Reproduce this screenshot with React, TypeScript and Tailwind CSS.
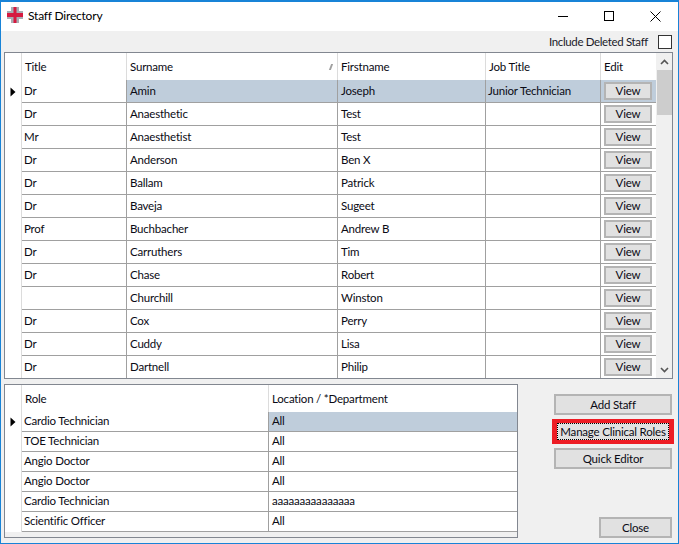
const staff = [
  ["Dr", "Amin", "Joseph", "Junior Technician"],
  ["Dr", "Anaesthetic", "Test", ""],
  ["Mr", "Anaesthetist", "Test", ""],
  ["Dr", "Anderson", "Ben X", ""],
  ["Dr", "Ballam", "Patrick", ""],
  ["Dr", "Baveja", "Sugeet", ""],
  ["Prof", "Buchbacher", "Andrew B", ""],
  ["Dr", "Carruthers", "Tim", ""],
  ["Dr", "Chase", "Robert", ""],
  ["", "Churchill", "Winston", ""],
  ["Dr", "Cox", "Perry", ""],
  ["Dr", "Cuddy", "Lisa", ""],
  ["Dr", "Dartnell", "Philip", ""],
];

const roles = [
  ["Cardio Technician", "All"],
  ["TOE Technician", "All"],
  ["Angio Doctor", "All"],
  ["Angio Doctor", "All"],
  ["Cardio Technician", "aaaaaaaaaaaaaaa"],
  ["Scientific Officer", "All"],
];

function Arrow() {
  return (
    <svg width="6" height="10" viewBox="0 0 6 10" className="block">
      <path d="M0.5 0.5 L5.5 5 L0.5 9.5 Z" fill="#000" />
    </svg>
  );
}

function Btn({ label, className }: { label: string; className: string }) {
  return (
    <div className={"flex items-center justify-center border-2 border-[#b4b4b4] bg-[#e1e1e1] " + className}>
      {label}
    </div>
  );
}

export default function App() {
  return (
    <div className="w-[679px] h-[544px] overflow-hidden flex flex-col bg-[#f0f0f0] border border-[#1883d7] border-t-2 text-[11.5px] tracking-[-0.2px] text-[#0a0a14] font-['Lato','Roboto',sans-serif]">
      <div className="h-[29px] shrink-0 bg-white flex items-center pb-[1px]">
        <svg width="16" height="16" viewBox="0 0 16 16" className="ml-[6px] mr-[5px] mb-[2px] shrink-0">
          <rect x="4" y="0" width="8" height="16" fill="#a9adb4" />
          <rect x="0" y="4" width="16" height="8" fill="#a9adb4" />
          <rect x="0" y="6" width="16" height="4" fill="#d6193f" />
          <rect x="6.5" y="0" width="3" height="16" fill="#d6193f" />
        </svg>
        <span className="text-[12px] text-black">Staff Directory</span>
        <div className="ml-auto flex items-center">
          <div className="w-[46px] flex justify-center">
            <div className="w-[10px] h-px bg-black" />
          </div>
          <div className="w-[46px] flex justify-center">
            <div className="w-[10px] h-[10px] border border-black" />
          </div>
          <div className="w-[46px] flex justify-center">
            <svg width="11" height="11" viewBox="0 0 11 11">
              <path d="M0.5 0.5 L10.5 10.5 M10.5 0.5 L0.5 10.5" stroke="#000" strokeWidth="1" fill="none" />
            </svg>
          </div>
        </div>
      </div>

      <div className="h-[21px] shrink-0 flex items-center justify-end pr-[6px] gap-[10px]">
        <span className="text-[#1a1a2a] tracking-[-0.35px]">Include Deleted Staff</span>
        <div className="w-[14px] h-[14px] mt-[1px] border border-[#333] bg-white" />
      </div>

      <div className="h-[327px] shrink-0 ml-[3px] w-[669px] border border-[#828790] bg-white flex overflow-hidden">
        <div className="flex-1 min-w-0 overflow-hidden">
          <div className="grid grid-cols-[17px_105px_211px_148px_115px_55px] h-[27px] items-stretch">
            <div className="border-r border-[#dcdcdc]" />
            <div className="flex items-center pl-[3px] border-r border-[#dcdcdc]">Title</div>
            <div className="flex items-center justify-between pl-[3px] pr-[5px] border-r border-[#dcdcdc]">
              <span>Surname</span>
              <span className="w-[2px] h-[6px] bg-[#a0a0a0] skew-x-[-20deg]" />
            </div>
            <div className="flex items-center pl-[3px] border-r border-[#dcdcdc]">Firstname</div>
            <div className="flex items-center pl-[3px] border-r border-[#dcdcdc]">Job Title</div>
            <div className="flex items-center pl-[3px]">Edit</div>
          </div>
          {staff.map((r, i) => (
            <div key={i} className="grid grid-cols-[17px_105px_211px_148px_115px_55px] h-[23px]">
              <div className="border-r border-[#dcdcdc] flex items-center justify-center">
                {i === 0 && <Arrow />}
              </div>
              <div className="flex items-center pl-[2px] bg-white border-r border-b border-[#a0a0a0]">{r[0]}</div>
              <div className={"flex items-center pl-[3px] border-r border-b border-[#a0a0a0] " + (i === 0 ? "bg-[#bfcddb]" : "bg-white")}>{r[1]}</div>
              <div className={"flex items-center pl-[3px] border-r border-b border-[#a0a0a0] " + (i === 0 ? "bg-[#bfcddb]" : "bg-white")}>{r[2]}</div>
              <div className={"flex items-center pl-[2px] border-r border-b border-[#a0a0a0] " + (i === 0 ? "bg-[#bfcddb]" : "bg-white")}>{r[3]}</div>
              <div className={"flex items-center pl-[3px] border-b border-[#a0a0a0] " + (i === 0 ? "bg-[#bfcddb]" : "bg-white")}>
                <Btn label="View" className="w-[48px] h-[18px]" />
              </div>
            </div>
          ))}
        </div>
        <div className="w-[16px] shrink-0 bg-[#f0f0f0] flex flex-col items-center">
          <div className="h-[17px] shrink-0 flex items-center justify-center">
            <svg width="9" height="6" viewBox="0 0 9 6">
              <path d="M1 5 L4.5 1.5 L8 5" stroke="#555" strokeWidth="1.6" fill="none" />
            </svg>
          </div>
          <div className="w-[15px] h-[45px] bg-[#cdcdcd]" />
          <div className="mt-auto h-[17px] shrink-0 flex items-center justify-center">
            <svg width="9" height="6" viewBox="0 0 9 6">
              <path d="M1 1 L4.5 4.5 L8 1" stroke="#555" strokeWidth="1.6" fill="none" />
            </svg>
          </div>
        </div>
      </div>

      <div className="flex flex-1 min-h-0 mt-[5px] ml-[3px] mb-[5px]">
        <div className="w-[514px] h-[154px] shrink-0 border border-[#828790] bg-[#f0f0f0] overflow-hidden">
          <div className="grid grid-cols-[17px_247px_248px] h-[27px] bg-white">
            <div className="border-r border-[#dcdcdc]" />
            <div className="flex items-center pl-[3px] pt-[1px] border-r border-[#dcdcdc]">Role</div>
            <div className="flex items-center pl-[3px] pt-[1px]">Location / *Department</div>
          </div>
          {roles.map((r, i) => (
            <div key={i} className="grid grid-cols-[17px_247px_248px] h-[20px] bg-white">
              <div className="border-r border-[#dcdcdc] flex items-center justify-center">
                {i === 0 && <Arrow />}
              </div>
              <div className="flex items-center pl-[2px] pb-[1px] border-r border-b border-[#a0a0a0]">{r[0]}</div>
              <div className={"flex items-center pl-[3px] pb-[1px] border-b border-[#a0a0a0] " + (i === 0 ? "bg-[#bfcddb]" : "")}>{r[1]}</div>
            </div>
          ))}
        </div>
        <div className="flex-1 flex flex-col items-end pr-[6px] pt-[10px]">
          <Btn label="Add Staff" className="w-[118px] h-[21px]" />
          <div className="mt-[4px] -mr-[2px] w-[122px] h-[25px] bg-[#ed1c24] flex items-center justify-center">
            <div className="w-[112px] h-[17px] bg-[#e1e1e1] border border-dotted border-black flex items-center justify-center whitespace-nowrap">
              Manage Clinical Roles
            </div>
          </div>
          <Btn label="Quick Editor" className="mt-[4px] w-[118px] h-[21px]" />
          <Btn label="Close" className="mt-auto w-[73px] h-[21px]" />
        </div>
      </div>
    </div>
  );
}
